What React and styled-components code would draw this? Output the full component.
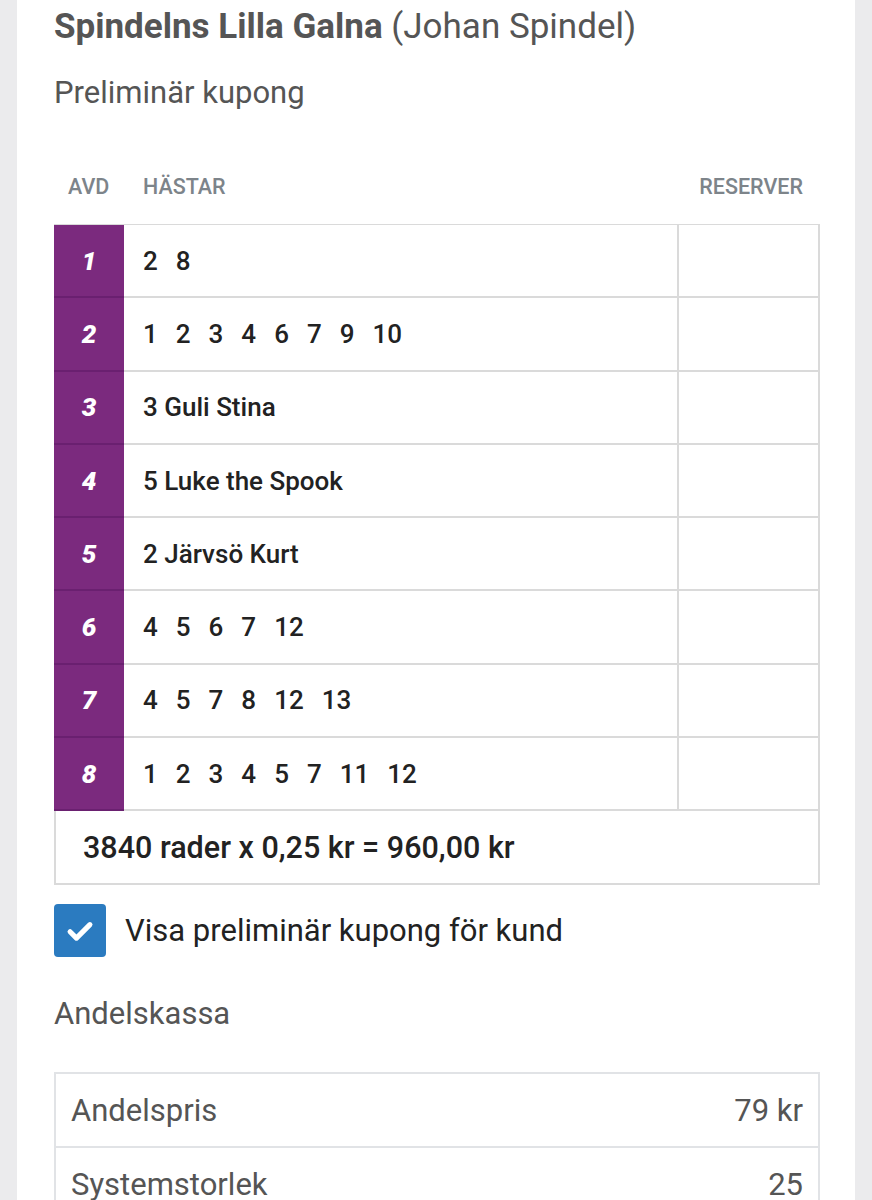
import React from 'react'
import styled, { createGlobalStyle } from 'styled-components'

const GlobalStyle = createGlobalStyle`
  html, body {
    margin: 0;
    padding: 0;
    background: #ebebed;
    font-family: Roboto, "Noto Sans", sans-serif;
  }
`

const legs = [
  { avd: 1, horses: ['2', '8'] },
  { avd: 2, horses: ['1', '2', '3', '4', '6', '7', '9', '10'] },
  { avd: 3, name: '3 Guli Stina' },
  { avd: 4, name: '5 Luke the Spook' },
  { avd: 5, name: '2 Järvsö Kurt' },
  { avd: 6, horses: ['4', '5', '6', '7', '12'] },
  { avd: 7, horses: ['4', '5', '7', '8', '12', '13'] },
  { avd: 8, horses: ['1', '2', '3', '4', '5', '7', '11', '12'] },
]

const shares = [
  { label: 'Andelspris', value: '79 kr' },
  { label: 'Systemstorlek', value: '25' },
]

const App = () => {
  return (
    <>
      <GlobalStyle />
      <Card>
        <Title>
          <strong>Spindelns Lilla Galna</strong> (Johan Spindel)
        </Title>
        <SubTitle>Preliminär kupong</SubTitle>

        <HeaderRow>
          <HeaderCell>AVD</HeaderCell>
          <HeaderCell>HÄSTAR</HeaderCell>
          <HeaderCell $right>RESERVER</HeaderCell>
        </HeaderRow>

        <Coupon>
          {legs.map(leg => (
            <LegRow key={leg.avd}>
              <AvdCell>{leg.avd}</AvdCell>
              <HorseCell>
                {leg.horses
                  ? leg.horses.map(h => <Num key={h}>{h}</Num>)
                  : leg.name}
              </HorseCell>
              <ReserveCell />
            </LegRow>
          ))}
          <SumRow>3840 rader x 0,25 kr = 960,00 kr</SumRow>
        </Coupon>

        <CheckRow>
          <CheckBox>
            <svg width="34" height="34" viewBox="0 0 24 24" fill="none" stroke="#fff" strokeWidth="3.6" strokeLinecap="round" strokeLinejoin="round">
              <path d="M5 12.5l4.5 4.5L19 7.5" />
            </svg>
          </CheckBox>
          <CheckLabel>Visa preliminär kupong för kund</CheckLabel>
        </CheckRow>

        <SectionTitle>Andelskassa</SectionTitle>

        <InfoTable>
          {shares.map(s => (
            <InfoRow key={s.label}>
              <span>{s.label}</span>
              <span>{s.value}</span>
            </InfoRow>
          ))}
        </InfoTable>
      </Card>
    </>
  )
}

const Card = styled.div`
  box-sizing: border-box;
  margin: 0 17px;
  min-height: 1200px;
  background: #fff;
  padding: 6px 35px 0 37px;
  color: #555;
`

const Title = styled.h1`
  margin: 0;
  font-size: 35px;
  line-height: 42px;
  font-weight: 400;
  color: #555;
  white-space: nowrap;

  & strong {
    font-weight: 700;
  }
`

const SubTitle = styled.h2`
  margin: 27px 0 0;
  font-size: 31px;
  line-height: 36px;
  font-weight: 400;
  color: #555;
`

const HeaderRow = styled.div`
  display: grid;
  grid-template-columns: 70px 1fr 139px;
  align-items: center;
  margin-top: 55px;
  height: 40px;
  margin-bottom: 18px;
`

const HeaderCell = styled.div`
  font-size: 21.5px;
  font-weight: 500;
  color: #7d848a;
  text-transform: uppercase;
  padding-left: ${p => (p.$right ? '0' : '14px')};
  padding-right: ${p => (p.$right ? '17px' : '0')};
  text-align: ${p => (p.$right ? 'right' : 'left')};
  white-space: nowrap;
  &:nth-child(2) {
    padding-left: 19px;
  }
`

const Coupon = styled.div`
  border: 2px solid #dadada;
  border-left: none;
  border-top: 1px solid #dadada;
`

const LegRow = styled.div`
  display: grid;
  grid-template-columns: 70px 1fr 139px;
  height: 73.3px;
  box-sizing: border-box;
  border-bottom: 2px solid #dadada;
`

const AvdCell = styled.div`
  background: #7b2a7e;
  color: #fff;
  display: flex;
  align-items: center;
  justify-content: center;
  font-size: 26px;
  font-weight: 900;
  font-style: italic;
  margin-bottom: -2px;
  border-bottom: 2px solid #6a2070;
`

const HorseCell = styled.div`
  display: flex;
  align-items: center;
  gap: 18px;
  padding-left: 19px;
  font-size: 26px;
  font-weight: 500;
  color: #222;
  border-right: 2px solid #dadada;
`

const Num = styled.span``

const ReserveCell = styled.div``

const SumRow = styled.div`
  height: 72px;
  display: flex;
  align-items: center;
  padding-left: 27px;
  border-left: 2px solid #dadada;
  font-size: 30.5px;
  font-weight: 500;
  color: #222;
`

const CheckRow = styled.div`
  display: flex;
  align-items: center;
  gap: 19px;
  margin-top: 19px;
`

const CheckBox = styled.div`
  width: 52px;
  height: 53px;
  border-radius: 4px;
  background: #2b7bc0;
  display: flex;
  align-items: center;
  justify-content: center;
`

const CheckLabel = styled.span`
  font-size: 31px;
  color: #222;
`

const SectionTitle = styled.h3`
  margin: 39px 0 0;
  font-size: 31px;
  line-height: 36px;
  font-weight: 400;
  color: #555;
`

const InfoTable = styled.div`
  margin-top: 40px;
  border: 2px solid #e1e3e6;
  border-bottom: none;
`

const InfoRow = styled.div`
  display: flex;
  justify-content: space-between;
  align-items: center;
  height: 72px;
  padding: 0 15px;
  border-bottom: 2px solid #e1e3e6;
  font-size: 31px;
  color: #555;
`

export default App
